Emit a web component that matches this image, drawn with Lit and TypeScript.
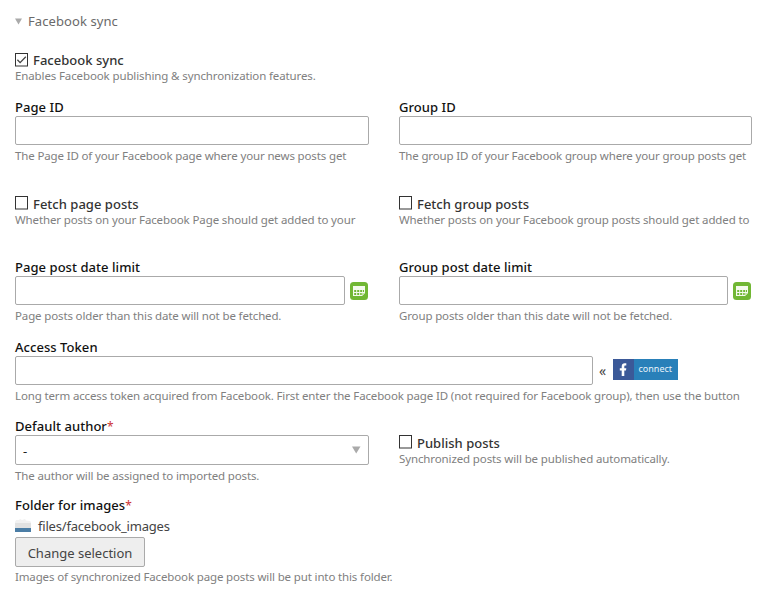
import { LitElement, html, css, svg, nothing } from "lit";
import { customElement, property } from "lit/decorators.js";

@customElement("form-field")
class FormField extends LitElement {
  @property() label = "";
  @property() hint = "";
  @property({ type: Boolean }) required = false;

  static styles = css`
    :host { display: block; min-width: 0; }
    .label { height: 18px; line-height: 18px; font-size: 13px; font-weight: 500; color: #111; white-space: nowrap; letter-spacing: 0.05px; }
    .star { color: #c33; font-weight: 400; font-size: 12px; }
    .hint { margin-top: 3px; height: 15px; line-height: 16px; white-space: nowrap; font-size: 11.5px; letter-spacing: -0.14px; color: #808080; }
  `;

  render() {
    return html`
      <div class="label">${this.label}${this.required ? html`<span class="star">*</span>` : nothing}</div>
      <slot></slot>
      <div class="hint">${this.hint}</div>
    `;
  }
}

@customElement("check-field")
class CheckField extends LitElement {
  @property() label = "";
  @property() hint = "";
  @property({ type: Boolean }) checked = false;

  static styles = css`
    :host { display: block; min-width: 0; }
    .line { display: flex; height: 16px; align-items: flex-start; gap: 5px; }
    .box { width: 13px; height: 14px; margin-top: 1px; flex: none; display: block; }
    .label { line-height: var(--check-line, 18px); font-size: 13px; font-weight: 500; color: #333; white-space: nowrap; letter-spacing: 0.02px; }
    .hint { margin-top: var(--hint-gap, 1px); height: 15px; line-height: 16px; white-space: nowrap; font-size: 11.5px; letter-spacing: -0.12px; color: #808080; }
  `;

  render() {
    return html`
      <div class="line">
        <svg class="box" viewBox="0 0 13 14">
          <rect x="0.5" y="0.5" width="12" height="12.5" fill="#fff" stroke="#333" />
          ${this.checked ? svg`<path d="M2.4 6.8 5.1 9.6 10.8 3.8" fill="none" stroke="#444" stroke-width="1.3" />` : nothing}
        </svg>
        <span class="label">${this.label}</span>
      </div>
      <div class="hint">${this.hint}</div>
    `;
  }
}

const calendar = html`
  <svg class="calendar" viewBox="0 0 18 18">
    <rect width="18" height="18" rx="3.5" fill="#71b734" />
    <path d="M3 4h12v7l-3 3H3z" fill="#f4faee" />
    <path d="M4.200 8h2v2h-2zM7.200 8h2v2h-2zM10.200 8h2v2h-2zM4.200 11h2v2h-2zM7.200 11h2v2h-2zM10.200 11h1.500v2h-1.500zM13 8h1v2h-1z" fill="#71b734" />
    <path d="M12 14v-3h3z" fill="#c5e2aa" />
  </svg>
`;

@customElement("app-root")
class AppRoot extends LitElement {
  static styles = css`
    :host { display: block; box-sizing: border-box; width: 767px; height: 609px; overflow: hidden; padding: 0 15px; background: #fff; font-family: "Noto Sans", "Open Sans", sans-serif; color: #444; }
    .legend { display: flex; align-items: center; gap: 6px; height: 42px; margin-bottom: 10px; font-size: 13px; letter-spacing: 0.08px; color: #6a6a6a; }
    .legend svg { width: 7px; height: 7px; }
    .row { display: grid; grid-template-columns: 354px 353px; column-gap: 30px; align-items: start; }
    .wide { grid-column: 1 / -1; }
    .r1 { height: 46px; --check-line: 17px; --hint-gap: 0px; } .r2 { height: 97px; } .r3 { height: 63px; } .r4 { height: 80px; } .r5, .r6 { height: 79px; }
    .input { box-sizing: border-box; height: 29px; border: 1px solid #aaa; border-radius: 2px; background: #fff; flex: 1; }
    .line { display: flex; align-items: center; }
    .calendar { width: 18px; height: 18px; margin: 1px 1px 0 5px; flex: none; }
    .token { flex: none; width: 578px; }
    .arrow { width: 20px; box-sizing: border-box; padding-left: 6px; font-size: 14px; line-height: 18px; }
    .connect { display: flex; width: 65px; height: 21px; margin-bottom: 3px; background: #2980b9; color: #e8f3fa; font-size: 9px; line-height: 20px; }
    .connect svg { width: 21px; height: 21px; background: #3b5998; margin-right: 4.500px; }
    .select { box-sizing: border-box; display: flex; height: 30px; align-items: center; justify-content: space-between; padding: 0 7px; border: 1px solid #aaa; border-radius: 2px; font-size: 13px; color: #222; }
    .select span { padding-top: 2px; }
    .select svg { width: 10px; height: 8px; }
    .publish { margin-top: 17px; }
    .file { display: flex; align-items: center; height: 23px; gap: 7px; font-size: 13px; line-height: 20px; letter-spacing: -0.19px; }
    .file svg { width: 16px; height: 16px; }
    .button { box-sizing: border-box; display: block; width: 130px; height: 30px; margin-bottom: -1px; padding: 0; border: 1px solid #aaa; border-radius: 2px; background: #eee; color: #444; font: 13px/30px "Noto Sans", sans-serif; text-align: center; }
  `;

  render() {
    return html`
      <div class="legend">
        <svg viewBox="0 0 7 7"><path d="M0 .5h7L3.500 6.500z" fill="#aaa" /></svg>
        <span>Facebook sync</span>
      </div>
      <div class="row r1">
        <check-field checked label="Facebook sync" hint="Enables Facebook publishing &amp; synchronization features."></check-field>
      </div>
      <div class="row r2">
        <form-field label="Page ID" hint="The Page ID of your Facebook page where your news posts get"><div class="input"></div></form-field>
        <form-field label="Group ID" hint="The group ID of your Facebook group where your group posts get"><div class="input"></div></form-field>
      </div>
      <div class="row r3">
        <check-field label="Fetch page posts" hint="Whether posts on your Facebook Page should get added to your"></check-field>
        <check-field label="Fetch group posts" hint="Whether posts on your Facebook group posts should get added to"></check-field>
      </div>
      <div class="row r4">
        <form-field label="Page post date limit" hint="Page posts older than this date will not be fetched.">
          <div class="line"><div class="input"></div>${calendar}</div>
        </form-field>
        <form-field label="Group post date limit" hint="Group posts older than this date will not be fetched.">
          <div class="line"><div class="input"></div>${calendar}</div>
        </form-field>
      </div>
      <div class="row r5">
        <form-field class="wide" label="Access Token" hint="Long term access token acquired from Facebook. First enter the Facebook page ID (not required for Facebook group), then use the button">
          <div class="line">
            <div class="input token"></div>
            <span class="arrow">«</span>
            <span class="connect">
              <svg viewBox="0 0 21 21"><path d="M8.700 17v-5.500H6.800V9.200h1.900V7.500C8.700 5.300 9.900 4.200 11.700 4.200h1.600v2.300h-1c-.8 0-1 .4-1 1.100v1.600h2l-.3 2.300h-1.700V17z" fill="#fff" /></svg>
              connect
            </span>
          </div>
        </form-field>
      </div>
      <div class="row r6">
        <form-field required label="Default author" hint="The author will be assigned to imported posts.">
          <div class="select"><span>-</span><svg viewBox="0 0 10 8"><path d="M1 .5h8.500L5.200 7.500z" fill="#aaa" /></svg></div>
        </form-field>
        <check-field class="publish" label="Publish posts" hint="Synchronized posts will be published automatically."></check-field>
      </div>
      <div class="row">
        <form-field class="wide" required label="Folder for images" hint="Images of synchronized Facebook page posts will be put into this folder.">
          <div class="file">
            <svg viewBox="0 0 16 16"><path d="M0 4 1 2h3l1-1 2 1 3-1 1 1.500 4 .5 1 1V10H0z" fill="#f1f1f1" /><path d="M0 5h16v5H0z" fill="#e1e1e1" /><path d="M0 10h16v4H0z" fill="#4b7da5" /></svg>
            <span>files/facebook_images</span>
          </div>
          <button class="button">Change selection</button>
        </form-field>
      </div>
    `;
  }
}
